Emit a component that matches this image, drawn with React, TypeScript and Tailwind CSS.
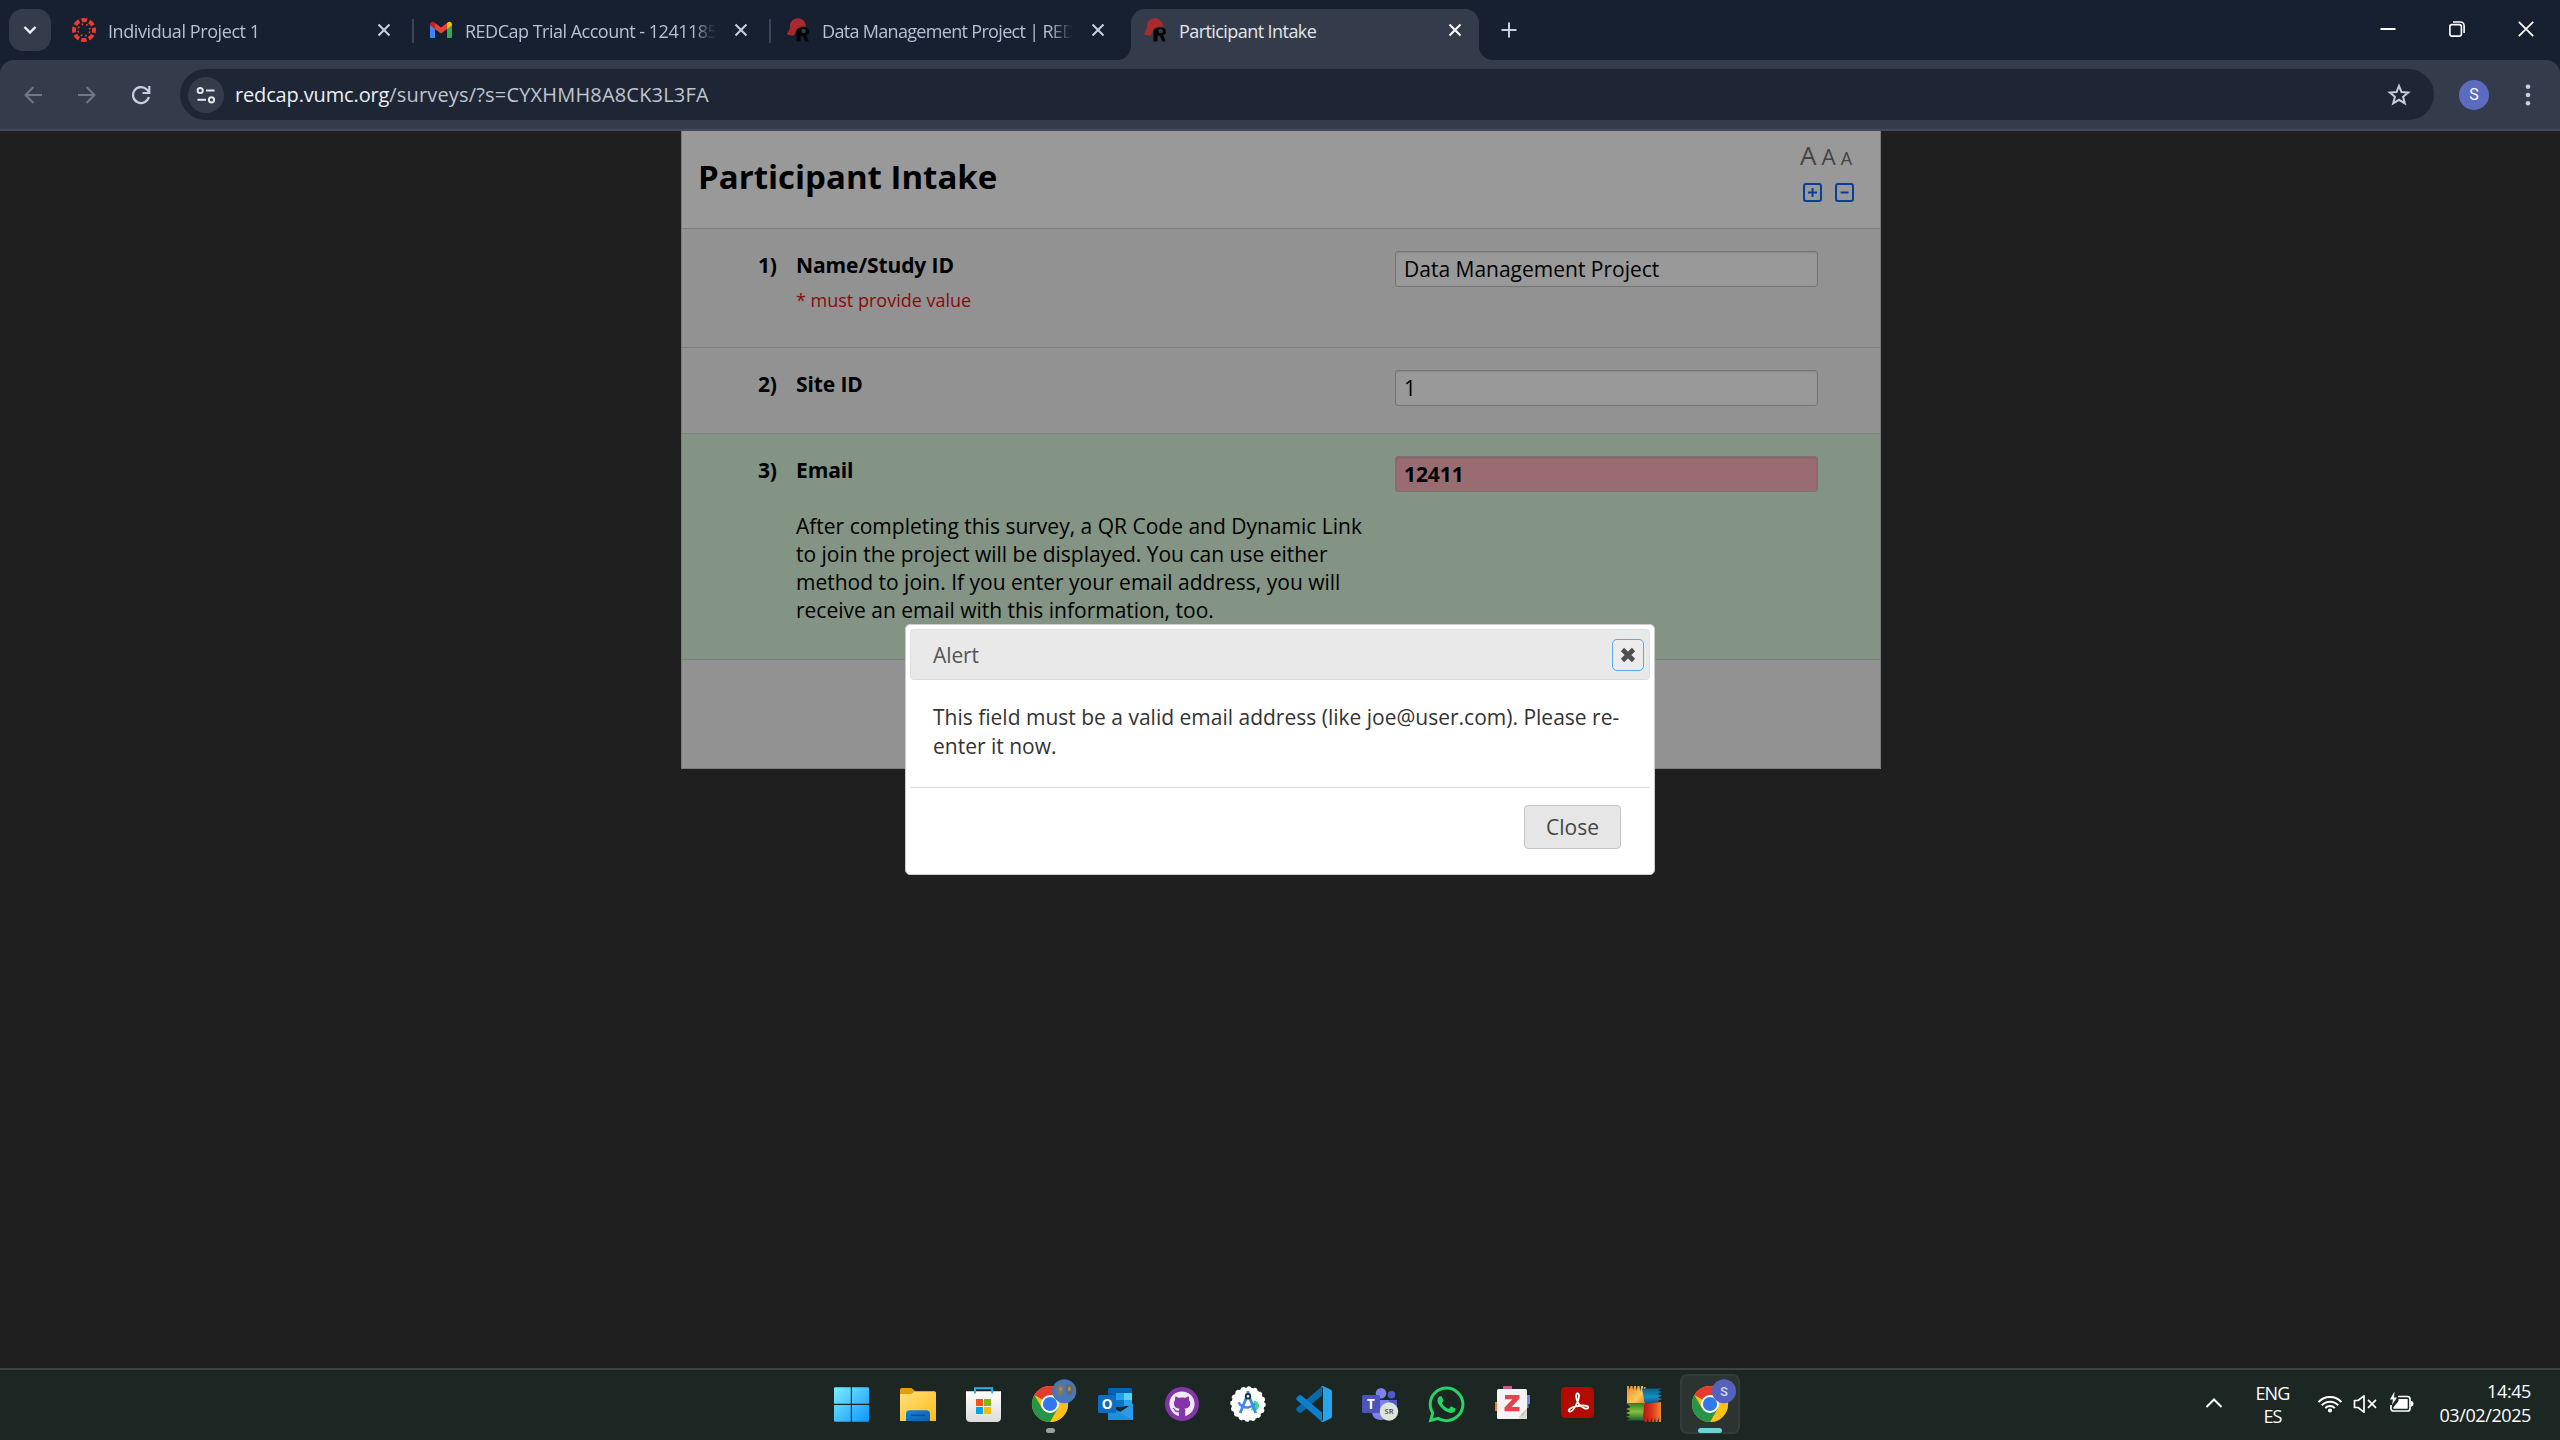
import React from "react";
import { FaGithub, FaWhatsapp } from "react-icons/fa";

type Kids = { children?: React.ReactNode };

/* ---------- favicons ---------- */

function CanvasIcon() {
  return (
    <svg width="24" height="24" viewBox="0 0 24 24">
      <circle cx="12" cy="12" r="10" fill="none" stroke="#e83e2f" strokeWidth="4" strokeDasharray="5.5 2.354" strokeDashoffset="2.75" />
      <circle cx="12" cy="12" r="5.9" fill="none" stroke="#e83e2f" strokeWidth="1.7" strokeDasharray="1.7 2.934" strokeDashoffset="3.2" />
    </svg>
  );
}

function GmailIcon() {
  return (
    <svg width="24" height="24" viewBox="0 0 24 24">
      <path d="M1 6v12.4c0 .9.7 1.6 1.6 1.6H6V10z" fill="#4285f4" />
      <path d="M23 6v12.4c0 .9-.7 1.6-1.6 1.6H18V10z" fill="#34a853" />
      <path d="M18 5.2V11l5-3.8V6.2c0-2.2-2.4-3.3-4.1-2z" fill="#fbbc04" />
      <path d="M6 11V5l6 4.6L18 5v6l-6 4.6z" fill="#ea4335" />
      <path d="M1 6.2v1L6 11V5l-.9-.8C3.400 2.900 1 4 1 6.200z" fill="#c5221f" />
    </svg>
  );
}

function RedcapIcon() {
  return (
    <svg width="24" height="24" viewBox="0 0 24 24">
      <path d="M10.500 23.500 V9.500 H17.500 C21 9.500 23 11 23 13.500 C23 15.600 21.800 16.800 20.200 17.300 L22.800 23.500 H19.400 L16.800 17.800 H14.500 V23.500Z" fill="#050505" />
      <circle cx="17.600" cy="13" r="2.200" fill="#343c4c" />
      <path d="M4 9 C3.500 4 7 0.300 12 0.300 C16.500 0.300 20 4 20 8.500 C16 8 12.500 9.500 10.500 12 C9.500 14 8.500 16 8 17.500 C5.500 17.600 2.500 17 0.800 16 C1.500 14.500 3.800 12.500 4 9Z" fill="#a92a2e" />
    </svg>
  );
}

/* ---------- tab strip ---------- */

function CloseX({ color }: { color: string }) {
  return (
    <svg width="14" height="14" viewBox="0 0 14 14" className="shrink-0">
      <path d="M1.500 1.500 L12.500 12.500 M12.500 1.500 L1.500 12.500" stroke={color} strokeWidth="2" fill="none" />
    </svg>
  );
}

function Tab({ icon, title, active, divider, tracking }: { icon: React.ReactNode; title: string; active?: boolean; divider?: boolean; tracking: string }) {
  return (
    <div className="relative flex h-[51px] w-[357px] shrink-0 items-start">
      <div className={active ? "flex h-[51px] w-[348px] items-start rounded-t-[14px] bg-[#343c4c]" : "flex h-[51px] w-[348px] items-start"}>
        <div className="ml-3 mt-[9px] h-6 w-6">{icon}</div>
        <div
          className={
            active
              ? `ml-3 mt-[10px] w-[251px] overflow-hidden whitespace-nowrap text-[18px] leading-6 text-[#e3e6ea] ${tracking}`
              : `ml-3 mt-[10px] w-[251px] overflow-hidden whitespace-nowrap text-[18px] leading-6 text-[#b6c0d4] [mask-image:linear-gradient(to_right,black_227px,transparent_251px)] ${tracking}`
          }
        >
          {title}
        </div>
        <div className="ml-[18px] mt-[14px]">
          <CloseX color={active ? "#ffffff" : "#c6d0e4"} />
        </div>
      </div>
      {divider && <div className="ml-1 mt-[10px] h-6 w-[2px] bg-[#3c4658]" />}
      {active && (
        <>
          <svg width="14" height="14" className="absolute bottom-0 -left-[14px]"><path d="M14 0 V14 H0 A14 14 0 0 0 14 0Z" fill="#343c4c" /></svg>
          <svg width="14" height="14" className="absolute bottom-0 left-[348px]"><path d="M0 0 V14 H14 A14 14 0 0 1 0 0Z" fill="#343c4c" /></svg>
        </>
      )}
    </div>
  );
}

function TabStrip() {
  return (
    <div className="flex h-[60px] items-start bg-[#172030] pt-[9px]">
      <div className="ml-[9px] mr-[9px] flex h-[42px] w-[42px] items-center justify-center rounded-[14px] bg-[#343c4c]">
        <svg width="14" height="10" viewBox="0 0 14 10"><path d="M1.500 2 L7 7.500 L12.500 2" stroke="#f1f3f6" strokeWidth="2.400" fill="none" /></svg>
      </div>
      <Tab icon={<CanvasIcon />} title="Individual Project 1" tracking="tracking-[-0.42px]" divider />
      <Tab icon={<GmailIcon />} title="REDCap Trial Account - 1241185" tracking="tracking-[-0.5px]" divider />
      <Tab icon={<RedcapIcon />} title="Data Management Project | RED" tracking="tracking-[-0.68px]" />
      <Tab icon={<RedcapIcon />} title="Participant Intake" tracking="tracking-[-0.57px]" active />
      <svg width="18" height="18" viewBox="0 0 18 18" className="ml-3 mt-3"><path d="M9 1.500 V16.500 M1.500 9 H16.500" stroke="#c6d0e4" strokeWidth="2" /></svg>
      <div className="ml-auto mr-[26px] mt-3 flex items-center gap-[53px]">
        <svg width="16" height="16"><path d="M0.500 8 H15.500" stroke="#fff" strokeWidth="2" /></svg>
        <svg width="16" height="16" viewBox="0 0 16 16" fill="none" stroke="#fff" strokeWidth="1.600">
          <rect x="0.900" y="3.600" width="11.500" height="11.500" rx="2" />
          <path d="M4 1 H11.500 A3.600 3.600 0 0 1 15.100 4.600 V12" />
        </svg>
        <svg width="16" height="16"><path d="M0.800 0.800 L15.200 15.200 M15.200 0.800 L0.800 15.200" stroke="#fff" strokeWidth="1.700" /></svg>
      </div>
    </div>
  );
}

/* ---------- address bar ---------- */

function Toolbar() {
  return (
    <div className="bg-[#172030]">
      <div className="flex h-[71px] items-start rounded-t-[14px] border-b-2 border-[#434b5b] bg-[#343c4c] pt-[9px]">
        <svg width="18" height="18" viewBox="0 0 18 18" className="ml-6 mt-[17px]" fill="none" stroke="#707888" strokeWidth="2"><path d="M18 9 H1.500 M9.500 1 L1.500 9 L9.500 17" /></svg>
        <svg width="18" height="18" viewBox="0 0 18 18" className="ml-9 mt-[17px]" fill="none" stroke="#707888" strokeWidth="2"><path d="M0 9 H16.500 M8.500 1 L16.500 9 L8.500 17" /></svg>
        <svg width="20" height="20" viewBox="0 0 20 20" className="ml-[35px] mt-4" fill="none" stroke="#c6d0e4" strokeWidth="2.200">
          <path d="M17.800 12 A8 8 0 1 1 15.800 4.500 L18 6.800" />
          <path d="M18.300 1 V8 H11.500" />
        </svg>
        <div className="ml-[29px] flex h-[51px] w-[2254px] items-center rounded-full bg-[#1e2636]">
          <div className="ml-2 flex h-9 w-9 items-center justify-center rounded-full bg-[#343c4c]">
            <svg width="20" height="18" viewBox="0 0 20 18" fill="none" stroke="#e3e6ea" strokeWidth="2">
              <circle cx="4.200" cy="4.500" r="2.600" /><path d="M10 4.500 H18.500" />
              <circle cx="15.500" cy="13.800" r="2.600" /><path d="M1.500 13.800 H10" />
            </svg>
          </div>
          <div className="ml-[11px] whitespace-nowrap text-[20px] leading-7 text-[#c0c4cc]">
            <span className="tracking-[-0.15px] text-[#eceef2]">redcap.vumc.org</span>
            <span className="tracking-[0.18px]">/surveys/?s=CYXHMH8A8CK3L3FA</span>
          </div>
          <svg width="24" height="24" viewBox="0 0 24 24" className="ml-auto mr-[23px]" fill="none" stroke="#c9ccd2" strokeWidth="2">
            <path d="M12 2.800 L14.500 9 L21.200 9.500 L16.100 13.800 L17.800 20.400 L12 16.800 L6.200 20.400 L7.900 13.800 L2.800 9.500 L9.500 9Z" />
          </svg>
        </div>
        <div className="ml-[25px] mt-[11px] flex h-[30px] w-[30px] items-center justify-center rounded-full bg-[#5c6bc0] font-[Roboto] text-[16px] text-white">S</div>
        <svg width="6" height="24" viewBox="0 0 6 24" className="ml-[36px] mt-[14px]" fill="#c6d0e4"><circle cx="3" cy="3.700" r="2.300" /><circle cx="3" cy="12" r="2.300" /><circle cx="3" cy="20.300" r="2.300" /></svg>
      </div>
    </div>
  );
}

/* ---------- survey ---------- */

function Question({ num, label, value, error, height, children }: Kids & { num: string; label: string; value: string; error?: boolean; height: string }) {
  return (
    <div className={`${height} flex border-b border-[#818181] pt-[22px] ${error ? "bg-[#839384]" : "bg-[#929292]"}`}>
      <div className="ml-[76px] w-[38px] text-[21px] font-bold leading-7 tracking-[-0.2px]">{num}</div>
      <div className="w-[599px]">
        <div className="text-[21px] font-bold leading-7 tracking-[-0.1px]">{label}</div>
        {children}
      </div>
      <div
        className={`flex h-9 w-[423px] items-center rounded-[3px] border border-[#757575] pl-2 text-[21px] leading-7 shadow-[inset_0_1px_2px_rgba(0,0,0,0.12)] ${error ? "bg-[#996c72] font-bold tracking-[-0.1px]" : "bg-[#999999]"}`}
      >
        {value}
      </div>
    </div>
  );
}

function Survey() {
  return (
    <div className="ml-[681px] flex h-[638px] w-[1200px] flex-col border-x border-b border-[#7b7b7b] bg-[#929292] text-black">
      <div className="flex h-[98px] shrink-0 justify-between border-b border-[#818181] bg-[#999999]">
        <div className="ml-4 mt-6 text-[33px] font-bold leading-[44px]">Participant Intake</div>
        <div className="mr-[26px] mt-2 flex w-[54px] flex-col">
          <div className="flex items-baseline gap-[5px] leading-8 text-[#434343]">
            <span className="text-[26px]">A</span>
            <span className="text-[22.500px]">A</span>
            <span className="text-[18px]">A</span>
          </div>
          <div className="mt-[9px] flex justify-between pl-[3px]">
            <svg width="19" height="19" viewBox="0 0 19 19" fill="none" stroke="#07409c" strokeWidth="2"><rect x="1" y="1" width="17" height="17" rx="2" /><path d="M9.500 5 V14 M5 9.500 H14" /></svg>
            <svg width="19" height="19" viewBox="0 0 19 19" fill="none" stroke="#07409c" strokeWidth="2"><rect x="1" y="1" width="17" height="17" rx="2" /><path d="M5.500 9.500 H13.500" /></svg>
          </div>
        </div>
      </div>
      <Question num="1)" label="Name/Study ID" value="Data Management Project" height="h-[119px]">
        <div className="mt-[9px] text-[18px] leading-6 text-[#8a0a0a]">* must provide value</div>
      </Question>
      <Question num="2)" label="Site ID" value="1" height="h-[86px]" />
      <Question num="3)" label="Email" value="12411" error height="h-[226px]">
        <div className="mt-7 whitespace-nowrap text-[21px] leading-7">
          After completing this survey, a QR Code and Dynamic Link<br />
          to join the project will be displayed. You can use either<br />
          method to join. If you enter your email address, you will<br />
          receive an email with this information, too.
        </div>
      </Question>
    </div>
  );
}

function AlertDialog() {
  return (
    <div className="absolute left-[905px] top-[624px] h-[251px] w-[750px] rounded-[5px] border border-[#cccccc] bg-white px-1 pt-1">
      <div className="flex h-[51px] items-center justify-between rounded-[4px] border border-[#dddddd] bg-[#e9e9e9] pl-[22px] pr-[5px]">
        <div className="text-[21px] leading-7 tracking-[-0.1px] text-[#555555]">Alert</div>
        <div className="flex h-8 w-8 items-center justify-center rounded-[5px] border-[1.500px] border-[#5ea5ee] bg-[#ececec]">
          <svg width="16" height="16" viewBox="0 0 16 16"><path d="M2.500 2.500 L13.500 13.500 M13.500 2.500 L2.500 13.500" stroke="#4f4f4f" strokeWidth="4.600" /></svg>
        </div>
      </div>
      <div className="h-[107px] pl-[23px] pt-[23px] text-[21px] leading-[29px] text-[#333333]">
        <div className="whitespace-nowrap">This field must be a valid email address (like joe@user.com). Please re-</div>
        <div>enter it now.</div>
      </div>
      <div className="flex justify-end border-t border-[#dddddd] pr-[29px] pt-[17px]">
        <div className="flex h-11 w-[97px] items-center justify-center rounded-[4px] border border-[#c5c5c5] bg-[#e6e6e6] pb-px text-[21px] leading-7 text-[#454545]">Close</div>
      </div>
    </div>
  );
}

/* ---------- taskbar ---------- */

function Pic({ children }: Kids) {
  return <svg width="36" height="36" viewBox="0 0 36 36" className="overflow-visible">{children}</svg>;
}

function Chrome() {
  return (
    <>
      <circle cx="18" cy="18" r="18" fill="#fbc116" />
      <path d="M18 18 L2.410 9 A18 18 0 0 1 33.590 9 L18 9Z" fill="#e33b2e" />
      <path d="M18 9 H33.590 A18 18 0 0 1 18 36 L25.800 22.500Z" fill="#fbc116" />
      <path d="M10.200 22.500 L2.410 9 A18 18 0 0 0 18 36 L25.800 22.500 L18 27Z" fill="#269546" />
      <circle cx="18" cy="18" r="9" fill="#fff" />
      <circle cx="18" cy="18" r="7.100" fill="#3079ec" />
    </>
  );
}

function Slot({ children, active }: Kids & { active?: boolean }) {
  return (
    <div className={active ? "flex h-[60px] w-[60px] items-center justify-center rounded-[7px] border-2 border-[#343c39] bg-[#2c3431]" : "flex h-[60px] w-[60px] items-center justify-center"}>
      {children}
    </div>
  );
}

function TaskIcons() {
  return (
    <div className="flex gap-[6px]">
      <Slot>
        <Pic>
          <defs><linearGradient id="win" gradientUnits="userSpaceOnUse" x1="0" y1="0" x2="36" y2="36"><stop offset="0" stopColor="#7df0ff" /><stop offset="1" stopColor="#0c93fb" /></linearGradient></defs>
          <path d="M1.200 1.300 H16.800 V17.700 H0 V2.500Q0 1.300 1.200 1.300Z M18 1.300 H33.800 Q35 1.300 35 2.500 V17.700 H18Z M0 19 H16.800 V35.800 H1.200 Q0 35.800 0 34.500Z M18 19 H35 V34.500 Q35 35.800 33.800 35.800 H18Z" fill="url(#win)" />
        </Pic>
      </Slot>
      <Slot>
        <Pic>
          <defs>
            <linearGradient id="fold" x1="0" y1="0" x2="1" y2="1"><stop offset="0" stopColor="#ffe07a" /><stop offset="1" stopColor="#fbbd1c" /></linearGradient>
            <linearGradient id="pock" x1="0" y1="0" x2="1" y2="1"><stop offset="0" stopColor="#1583d8" /><stop offset="1" stopColor="#0b60ab" /></linearGradient>
          </defs>
          <path d="M0 3.500 Q0 2 1.500 2 H11.500 L15.500 5.500 L11 10 H0Z" fill="#e0a008" />
          <path d="M0 8 H11 L15 5.200 H34.500 Q36 5.200 36 6.700 V35 H0Z" fill="url(#fold)" />
          <path d="M6 35 V28 Q6 24.300 9.700 24.300 H26.300 Q30 24.300 30 28 V35Z" fill="url(#pock)" />
          <path d="M11 29.300 H25" stroke="#0a4a86" strokeWidth="1.500" />
        </Pic>
      </Slot>
      <Slot>
        <Pic>
          <defs><linearGradient id="bag" x1="0" y1="0" x2="0" y2="1"><stop offset="0" stopColor="#ffffff" /><stop offset="1" stopColor="#dcdcdc" /></linearGradient></defs>
          <path d="M0 5.300 H35 V31.500 Q35 36 30.500 36 H4.500 Q0 36 0 31.500Z" fill="url(#bag)" />
          <path d="M9 7.500 V2.300 H26.200 V7.500" fill="none" stroke="#2cb5ea" strokeWidth="2" />
          <path d="M10 13 h7 v7 h-7z" fill="#f1511b" /><path d="M18 13 h7 v7 h-7z" fill="#80bb03" />
          <path d="M10 21 h7 v7 h-7z" fill="#02a4ef" /><path d="M18 21 h7 v7 h-7z" fill="#fbb902" />
        </Pic>
      </Slot>
      <div className="relative">
        <Slot>
          <Pic>
            <Chrome />
            <circle cx="32.300" cy="5.200" r="12" fill="#4478b8" />
            <path d="M24 2 Q26 -3.500 30.500 -1 Q33 3 31.500 7 Q29 10.500 25.500 9Z" fill="#7d756c" />
            <path d="M33.500 0 Q38 -4 41 1 Q42 6 38 9.500 Q34.500 8 33.500 4Z" fill="#6f675f" />
            <path d="M27 2 q1.500 -2.500 3 0 l-.5 3 h-2z M36 1.500 q1.500 -2 3 .5 l-.8 3 h-2z" fill="#a08c76" />
          </Pic>
        </Slot>
        <div className="absolute bottom-[1px] left-[25.500px] h-[5px] w-[9px] rounded-full bg-[#9a9f9d]" />
      </div>
      <Slot>
        <Pic>
          <path d="M11.500 2 H32.500 Q34 2 34 3.500 V20 H10 V3.500 Q10 2 11.500 2Z" fill="#0a63b0" />
          <path d="M10 7 H18 V14 H10Z" fill="#0a5aa6" /><path d="M18 7 H26 V14 H18Z" fill="#28a0e6" /><path d="M26 7 H34 V14 H26Z" fill="#50d5fb" />
          <path d="M18 14 H26 V21 H18Z" fill="#0c72c5" /><path d="M26 14 H34 V20 H26Z" fill="#2aa3ea" />
          <path d="M10 20 L23 26 L35 17.500 V34 H10Z" fill="#1b83d6" />
          <path d="M35 17.500 V34 L10 34 Z" fill="#2b9be8" />
          <path d="M10 20 L35 34 H10Z" fill="#1c8fe0" />
          <rect x="0" y="9" width="18" height="18" rx="1.500" fill="#0f6cc2" />
          <text x="9" y="22.600" textAnchor="middle" fontFamily="Open Sans" fontWeight="700" fontSize="13.500" fill="#fff">O</text>
        </Pic>
      </Slot>
      <Slot>
        <div className="flex h-[34px] w-[34px] items-center justify-center rounded-full bg-[#8334a6]">
          <FaGithub size={26} color="#efe8f5" />
        </div>
      </Slot>
      <Slot>
        <Pic>
          <circle cx="18" cy="18" r="16.500" fill="#fff" />
          <circle cx="18" cy="18" r="16.400" fill="none" stroke="#fff" strokeWidth="2.600" strokeLinecap="round" strokeDasharray="1.500 4.940" />
          <path d="M21 24 L24 14.500 A5.500 5.500 0 0 1 29.200 20.500 Q28 24 25.500 25Z" fill="#3ddc84" />
          <path d="M18 5 V9 M16.500 11.500 L10.200 27 M19.500 11.500 L25.800 27" stroke="#4285f4" strokeWidth="2.800" fill="none" />
          <path d="M8.500 16.500 Q12 22 18 21.500 Q22 21 25 18" stroke="#4285f4" strokeWidth="2.400" fill="none" />
          <circle cx="18" cy="10.300" r="2.300" fill="#fff" stroke="#12303f" strokeWidth="1.800" />
        </Pic>
      </Slot>
      <Slot>
        <Pic>
          <path d="M26 .2 L26 9.500 L5.500 26.500 Q4 27.500 2.800 26.500 L.6 24.500 Q-.5 23.300 .6 22Z" fill="#0569ac" />
          <path d="M26 35.800 V26.500 L5.500 9.500 Q4 8.500 2.800 9.500 L.6 11.500 Q-.5 12.700 .6 14Z" fill="#0d80cc" />
          <path d="M25 .5 Q26 -.3 27.500 .3 L34.500 3.600 Q36 4.400 36 6 V30 Q36 31.600 34.500 32.400 L27.500 35.700 Q26 36.300 25 35.500 L27 34 V2Z" fill="#25a5ee" />
        </Pic>
      </Slot>
      <Slot>
        <Pic>
          <circle cx="29.500" cy="8.800" r="3.800" fill="#5059c9" />
          <path d="M24 14 H35 V24 Q35 28 30 28 H24Z" fill="#5059c9" />
          <circle cx="19" cy="7.300" r="5.300" fill="#7b83eb" />
          <path d="M10 14 H27 V26 Q27 34 18.500 34 Q10 33 10 26Z" fill="#7b83eb" />
          <rect x="0" y="9" width="18" height="18" rx="1.500" fill="#4b53bc" />
          <text x="9" y="22.800" textAnchor="middle" fontFamily="Open Sans" fontWeight="700" fontSize="13.500" fill="#fff">T</text>
          <circle cx="27" cy="25.500" r="9.200" fill="#dfe3d8" />
          <text x="27" y="28.300" textAnchor="middle" fontFamily="Open Sans" fontWeight="600" fontSize="7.500" fill="#3f443c">SR</text>
        </Pic>
      </Slot>
      <Slot><FaWhatsapp size={41} color="#25d366" /></Slot>
      <Slot>
        <Pic>
          <path d="M9 0 H18 V5 H9Z" fill="#c25a8e" /><path d="M1 16 H5 V25 H1Z" fill="#f0763c" /><path d="M32 9 H36 V18 H32Z" fill="#7b84e0" /><path d="M31 18 H34.500 V22 H31Z" fill="#3aa0b8" />
          <path d="M3 4.500 Q3 3 4.500 3 H31.500 Q33 3 33 4.500 V33 H4.500 Q3 33 3 31.500Z" fill="#f4f4f4" />
          <path d="M25 33 L33 23 V33Z" fill="#d9d9d9" />
          <path d="M24.500 32 Q28 27 33 22.500 Q31 28 24.500 32Z" fill="#bdbdbd" />
          <path d="M27.500 29.500 L29.500 26 V29Z" fill="#e8b62c" />
          <path d="M11 9 H25.500 V12.500 L17.500 21 H25.500 V25.200 H10.500 V21.500 L18.500 13.200 H11Z" fill="#e8404f" />
        </Pic>
      </Slot>
      <Slot>
        <Pic>
          <rect x="1" y="1" width="33" height="31" rx="4.500" fill="#b30b00" />
          <path d="M17.500 7.500 C20 7.500 19.200 12 17 17 C15 21.500 12 26 9.800 25.600 C7 25 9.500 21.500 16 20.300 C22 19.200 28.500 19 28.300 21.500 C28 24 22 22.500 18.500 17.500 C15.500 13 15.500 7.500 17.500 7.500Z" fill="none" stroke="#fff" strokeWidth="1.800" />
        </Pic>
      </Slot>
      <Slot>
        <Pic>
          <defs>
            <linearGradient id="a1" x1="0" y1="0" x2="1" y2="1"><stop offset="0" stopColor="#f08a2a" /><stop offset=".6" stopColor="#fbc85a" /><stop offset="1" stopColor="#d97818" /></linearGradient>
            <linearGradient id="a2" x1="0" y1="0" x2="0" y2="1"><stop offset="0" stopColor="#0f5e86" /><stop offset=".5" stopColor="#1590c4" /><stop offset="1" stopColor="#0a4a6c" /></linearGradient>
            <linearGradient id="a3" x1="0" y1="0" x2="0" y2="1"><stop offset="0" stopColor="#2c7a35" /><stop offset=".5" stopColor="#8abf3a" /><stop offset="1" stopColor="#15603a" /></linearGradient>
            <linearGradient id="a4" x1="0" y1="0" x2="1" y2="0"><stop offset="0" stopColor="#b81414" /><stop offset=".5" stopColor="#d93a1c" /><stop offset="1" stopColor="#ef8a2c" /></linearGradient>
          </defs>
          <path d="M1 0 H3 L3.600 4 L4.500 0 H6.500 L7.200 4.500 L8 0 H10 L10.800 5 L11.500 0 H13.500 L14.300 5.500 L15 0 H17 L17.500 5 L18.300 1 H19.500 L20 18 L1 17Z" fill="url(#a1)" />
          <path d="M16 2.500 H36 L32 4.500 L36 6 L31.500 8 L36 9.800 L31.500 11.500 L36 13.300 L31.500 15 L36 18 L19 19Z" fill="url(#a2)" />
          <path d="M0 17 L18 17 L20 34.500 L0 34.500 L4.500 32.500 L0 30.800 L4.500 29 L0 27 L4.500 25 L0 23 L4.500 21Z" fill="url(#a3)" />
          <path d="M18 18 L35 16 V36 H33 L32.500 31 L31.500 36 H29.500 L29 31 L28 36 H26 L25.500 31 L24.500 36 H22.500 L22 31 L21 36 H19.500 L17 33Z" fill="url(#a4)" />
        </Pic>
      </Slot>
      <div className="relative">
        <Slot active>
          <Pic>
            <Chrome />
            <circle cx="32" cy="5.200" r="12" fill="#5562ba" />
            <text x="32" y="9.800" textAnchor="middle" fontFamily="Roboto" fontSize="12.500" fontWeight="500" fill="#d5daf5">S</text>
          </Pic>
        </Slot>
        <div className="absolute bottom-[1px] left-[18px] h-[5px] w-6 rounded-full bg-[#6fd0d8]" />
      </div>
    </div>
  );
}

function Taskbar() {
  return (
    <div className="flex h-[72px] items-start border-t-2 border-[#3a4441] bg-[#1c2622] text-white">
      <div className="ml-[822px] mt-1"><TaskIcons /></div>
      <div className="ml-auto mr-[29px] flex items-start text-[18px] leading-6">
        <svg width="18" height="12" viewBox="0 0 18 12" className="mr-8 mt-[27px]"><path d="M1.500 10 L9 2.500 L16.500 10" fill="none" stroke="#fff" strokeWidth="2" /></svg>
        <div className="mr-7 mt-[11px] w-[34px] text-center tracking-[-0.9px]"><div>ENG</div><div className="mt-[-1px]">ES</div></div>
        <svg width="26" height="20" viewBox="0 0 26 20" className="mr-[10px] mt-6" fill="none" stroke="#fff" strokeWidth="2">
          <path d="M1.500 8.200 A15.500 15.500 0 0 1 24.500 8.200" /><path d="M4.800 11.200 A11.200 11.200 0 0 1 21.200 11.200" /><path d="M8.200 14.200 A6.500 6.500 0 0 1 17.800 14.200" /><circle cx="13" cy="16.500" r="1.300" fill="#fff" strokeWidth="1.600" />
        </svg>
        <svg width="24" height="20" viewBox="0 0 24 20" className="mr-[12px] mt-6" fill="none" stroke="#fff" strokeWidth="1.700">
          <path d="M1.500 6.500 H5 L11 1.800 V18.200 L5 13.500 H1.500Z" strokeLinejoin="round" /><path d="M15 5.800 L23 13.800 M23 5.800 L15 13.800" />
        </svg>
        <svg width="25" height="22" viewBox="0 0 25 22" className="mr-[25px] mt-[21px]">
          <path d="M9 5.500 H18.500 Q21 5.500 21 8 V17.500 Q21 20 18.500 20 H4.500 Q2 20 2 17.500 V14" fill="none" stroke="#fff" strokeWidth="1.700" />
          <path d="M9.500 8 H18.700 V17.700 H4.300 V16.500 L9.500 10Z" fill="#fff" />
          <path d="M22 10 H23 Q24.500 10.500 24.500 12.700 Q24.500 15 23 15.500 H22Z" fill="#fff" />
          <path d="M5.500 .5 L1 8.500 H4 L3 14 L8 6.500 H5Z" fill="#fff" />
        </svg>
        <div className="mt-[9px] text-right tracking-[-0.4px]"><div>14:45</div><div>03/02/2025</div></div>
      </div>
    </div>
  );
}

export default function App() {
  return (
    <div className="relative flex h-[1440px] w-[2560px] flex-col overflow-hidden bg-[#1f1f1f] font-['Open_Sans',sans-serif]">
      <TabStrip />
      <Toolbar />
      <main className="flex-1 bg-[#1f1f1f]">
        <Survey />
      </main>
      <AlertDialog />
      <Taskbar />
    </div>
  );
}
